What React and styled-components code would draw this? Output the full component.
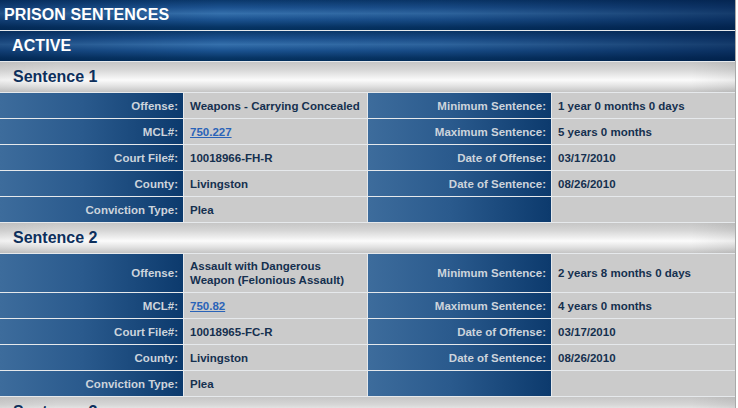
import styled, { createGlobalStyle } from "styled-components";

const GlobalStyle = createGlobalStyle`
  html, body {
    margin: 0;
    padding: 0;
    background: #ffffff;
    font-family: "Liberation Sans", Arial, sans-serif;
  }
`;

const Page = styled.div`
  width: 735px;
  display: flex;
  flex-direction: column;
  gap: 1px;
  background: #e6e9ec;
  border-right: 1px solid #a9a9a9;
  overflow: hidden;
  height: 408px;
`;

const BlueBar = styled.div`
  height: 30px;
  flex-shrink: 0;
  display: flex;
  align-items: center;
  padding-left: ${(p) => p.$indent}px;
  color: #ffffff;
  font-size: 16px;
  font-weight: bold;
  letter-spacing: 0.1px;
  background:
    linear-gradient(90deg, rgba(0, 25, 65, 0.35) 0%, rgba(0, 25, 65, 0) 30%, rgba(0, 25, 65, 0.15) 60%, rgba(0, 25, 65, 0.6) 100%),
    linear-gradient(180deg, #0a386b 0%, #1c5290 25%, #3570ac 45%, #1b5391 65%, #073565 90%, #03305d 100%);
`;

const GrayBar = styled.div`
  height: 30px;
  flex-shrink: 0;
  display: flex;
  align-items: center;
  padding-left: 13px;
  color: #0d2f5c;
  font-size: 16px;
  font-weight: bold;
  background:
    linear-gradient(90deg, rgba(0, 0, 0, 0.04) 0%, rgba(0, 0, 0, 0) 8%, rgba(0, 0, 0, 0) 94%, rgba(0, 0, 0, 0.06) 100%),
    linear-gradient(180deg, #c6c6c6 0%, #d6d6d6 25%, #fbfbfb 60%, #e2e2e2 80%, #c4c4c4 100%);
`;

const Grid = styled.div`
  display: grid;
  grid-template-columns: 183px 183px 183px 183px;
  gap: 1px;
  flex-shrink: 0;
`;

const Label = styled.div`
  min-height: 25px;
  box-sizing: border-box;
  padding: 5px 5px;
  display: flex;
  align-items: center;
  justify-content: flex-end;
  line-height: 14px;
  font-size: 11.5px;
  font-weight: bold;
  color: #cdd4dc;
  background: linear-gradient(90deg, #3d6c9c 0%, #2a5a8d 45%, #0c3a6d 100%);
`;

const Value = styled.div`
  min-height: 25px;
  box-sizing: border-box;
  padding: 5px 6px;
  display: flex;
  align-items: center;
  line-height: 14px;
  font-size: 11.5px;
  font-weight: bold;
  color: #15304f;
  background: #cbcbcb;
`;

const Link = styled.a`
  color: #2a63b8;
  text-decoration: underline;
`;

const sentences = [
  {
    title: "Sentence 1",
    offense: "Weapons - Carrying Concealed",
    mcl: "750.227",
    courtFile: "10018966-FH-R",
    county: "Livingston",
    conviction: "Plea",
    min: "1 year 0 months 0 days",
    max: "5 years 0 months",
    dateOffense: "03/17/2010",
    dateSentence: "08/26/2010",
  },
  {
    title: "Sentence 2",
    offense: (
      <>
        Assault with Dangerous
        <br />
        Weapon (Felonious Assault)
      </>
    ),
    mcl: "750.82",
    courtFile: "10018965-FC-R",
    county: "Livingston",
    conviction: "Plea",
    min: "2 years 8 months 0 days",
    max: "4 years 0 months",
    dateOffense: "03/17/2010",
    dateSentence: "08/26/2010",
  },
];

const Sentence = ({ s }) => (
  <>
    <GrayBar>{s.title}</GrayBar>
    <Grid>
      <Label>Offense:</Label>
      <Value>
        <span>{s.offense}</span>
      </Value>
      <Label>Minimum Sentence:</Label>
      <Value>{s.min}</Value>

      <Label>MCL#:</Label>
      <Value>
        <Link href="#">{s.mcl}</Link>
      </Value>
      <Label>Maximum Sentence:</Label>
      <Value>{s.max}</Value>

      <Label>Court File#:</Label>
      <Value>{s.courtFile}</Value>
      <Label>Date of Offense:</Label>
      <Value>{s.dateOffense}</Value>

      <Label>County:</Label>
      <Value>{s.county}</Value>
      <Label>Date of Sentence:</Label>
      <Value>{s.dateSentence}</Value>

      <Label>Conviction Type:</Label>
      <Value>{s.conviction}</Value>
      <Label />
      <Value />
    </Grid>
  </>
);

const App = () => (
  <>
    <GlobalStyle />
    <Page>
      <BlueBar $indent={4}>PRISON SENTENCES</BlueBar>
      <BlueBar $indent={12}>ACTIVE</BlueBar>
      {sentences.map((s) => (
        <Sentence key={s.title} s={s} />
      ))}
      <GrayBar>Sentence 3</GrayBar>
    </Page>
  </>
);

export default App;
